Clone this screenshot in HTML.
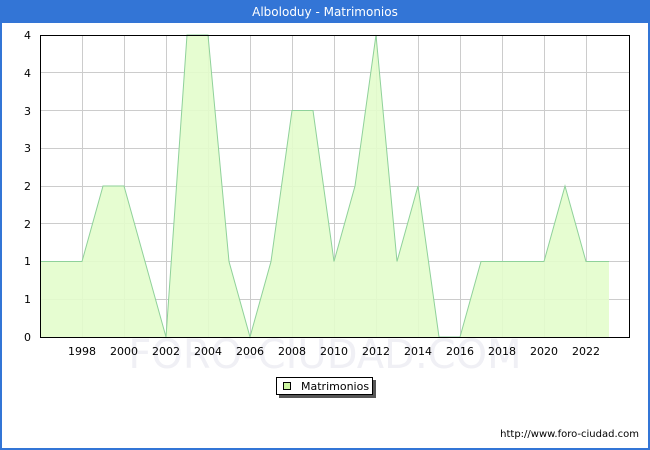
<!DOCTYPE html>
<html><head><meta charset="utf-8"><style>
html,body{margin:0;padding:0;width:650px;height:450px;overflow:hidden;background:#fff}
</style></head><body>
<svg width="650" height="450" xmlns="http://www.w3.org/2000/svg" font-family="'DejaVu Sans','Liberation Sans',sans-serif">
<rect x="0" y="0" width="650" height="450" fill="#fff"/>
<rect x="1" y="1" width="648" height="448" fill="none" stroke="#3375d6" stroke-width="2"/>
<rect x="0" y="0" width="650" height="23" fill="#3375d6"/>
<text x="325" y="16" text-anchor="middle" fill="#fff" font-size="12">Alboloduy - Matrimonios</text>
<text x="325" y="368" text-anchor="middle" fill="#f0f0f5" font-size="40" font-family="'DejaVu Sans',sans-serif">FORO-CIUDAD.COM</text>
<g stroke="#cccccc" stroke-width="1">
<line x1="82.5" y1="35" x2="82.5" y2="337"/><line x1="124.5" y1="35" x2="124.5" y2="337"/><line x1="166.5" y1="35" x2="166.5" y2="337"/><line x1="208.5" y1="35" x2="208.5" y2="337"/><line x1="250.5" y1="35" x2="250.5" y2="337"/><line x1="292.5" y1="35" x2="292.5" y2="337"/><line x1="334.5" y1="35" x2="334.5" y2="337"/><line x1="376.5" y1="35" x2="376.5" y2="337"/><line x1="418.5" y1="35" x2="418.5" y2="337"/><line x1="460.5" y1="35" x2="460.5" y2="337"/><line x1="502.5" y1="35" x2="502.5" y2="337"/><line x1="544.5" y1="35" x2="544.5" y2="337"/><line x1="586.5" y1="35" x2="586.5" y2="337"/>
<line x1="40" y1="72.5" x2="630" y2="72.5"/><line x1="40" y1="110.5" x2="630" y2="110.5"/><line x1="40" y1="148.5" x2="630" y2="148.5"/><line x1="40" y1="186.5" x2="630" y2="186.5"/><line x1="40" y1="223.5" x2="630" y2="223.5"/><line x1="40" y1="261.5" x2="630" y2="261.5"/><line x1="40" y1="299.5" x2="630" y2="299.5"/>
</g>
<polygon fill="#e3fdcc" fill-opacity="0.9" points="40,337 40,261.5 61,261.5 82,261.5 103,186 124,186 145,261.5 166,337 187,35 208,35 229,261.5 250,337 271,261.5 292,110.5 313,110.5 334,261.5 355,186 376,35 397,261.5 418,186 439,337 460,337 481,261.5 502,261.5 523,261.5 544,261.5 565,186 586,261.5 609,261.5 609,337"/>
<polyline fill="none" stroke="#8fd19a" stroke-width="1" points="40,261.5 61,261.5 82,261.5 103,186 124,186 145,261.5 166,337 187,35 208,35 229,261.5 250,337 271,261.5 292,110.5 313,110.5 334,261.5 355,186 376,35 397,261.5 418,186 439,337 460,337 481,261.5 502,261.5 523,261.5 544,261.5 565,186 586,261.5 609,261.5"/>
<rect x="40.5" y="35.5" width="589" height="302" fill="none" stroke="#000" stroke-width="1"/>
<g font-size="11" fill="#000" text-anchor="end">
<text x="31" y="39">4</text><text x="31" y="77">4</text><text x="31" y="115">3</text><text x="31" y="152">3</text><text x="31" y="190">2</text><text x="31" y="228">2</text><text x="31" y="265">1</text><text x="31" y="303">1</text><text x="31" y="341">0</text>
</g>
<g font-size="11" fill="#000" text-anchor="middle">
<text x="82" y="355">1998</text><text x="124" y="355">2000</text><text x="166" y="355">2002</text><text x="208" y="355">2004</text><text x="250" y="355">2006</text><text x="292" y="355">2008</text><text x="334" y="355">2010</text><text x="376" y="355">2012</text><text x="418" y="355">2014</text><text x="460" y="355">2016</text><text x="502" y="355">2018</text><text x="544" y="355">2020</text><text x="586" y="355">2022</text>
</g>
<rect x="279" y="380" width="97" height="18" fill="#555"/>
<rect x="276.5" y="377.5" width="96" height="17" fill="#fff" stroke="#000"/>
<rect x="283.5" y="382.5" width="7" height="7" fill="#ccf5a0" stroke="#000"/>
<text x="301" y="390" font-size="11" fill="#000">Matrimonios</text>
<text x="639" y="437" text-anchor="end" font-size="10" fill="#000">http://www.foro-ciudad.com</text>
</svg>
</body></html>
